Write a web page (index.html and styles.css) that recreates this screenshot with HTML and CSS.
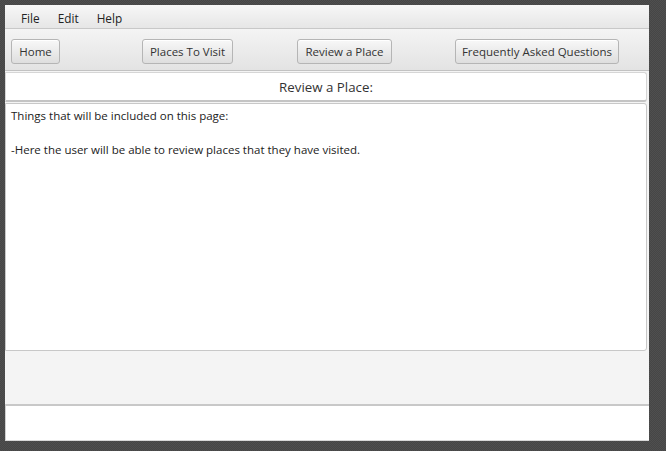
FILE: index.html
```html
<!DOCTYPE html>
<html>
<head>
<meta charset="utf-8">
<link rel="stylesheet" href="styles.css">
</head>
<body>
<div class="window">
  <div class="menubar">
    <span class="menu-item">File</span>
    <span class="menu-item">Edit</span>
    <span class="menu-item">Help</span>
  </div>
  <div class="toolbar">
    <button class="btn btn-home">Home</button>
    <button class="btn btn-places">Places To Visit</button>
    <button class="btn btn-review">Review a Place</button>
    <button class="btn btn-faq">Frequently Asked Questions</button>
  </div>
  <div class="title-box">Review a Place:</div>
  <div class="text-area">
    <p class="line">Things that will be included on this page:</p>
    <p class="line">&nbsp;</p>
    <p class="line">-Here the user will be able to review places that they have visited.</p>
  </div>
  <div class="spacer"></div>
  <div class="bottom-box"></div>
</div>
</body>
</html>
```

FILE: styles.css
```css
* { box-sizing: border-box; }
html, body { margin: 0; padding: 0; }
body {
  width: 666px;
  height: 451px;
  background-color: #4a4a4a;
  background-image: repeating-conic-gradient(#464646 0 25%, #4f4f4f 0 50%);
  background-size: 2px 2px;
  padding: 5px 0 0 5px;
  font-family: "Open Sans", "Noto Sans", sans-serif;
  font-size: 11.5px;
  color: #333;
}
.window {
  width: 644px;
  height: 436px;
  background: #f4f4f4;
  display: flex;
  flex-direction: column;
}
.menubar {
  height: 24px;
  display: flex;
  align-items: center;
  padding: 2px 0 0 16px;
  background: linear-gradient(#f7f7f7, #e6e6e6);
  border-bottom: 1px solid #c8c8c8;
}
.menu-item { margin-right: 18px; font-size: 11.8px; color: #222; }
.toolbar {
  height: 42px;
  display: flex;
  align-items: flex-start;
  padding: 10px 0 0 6px;
  background: linear-gradient(#f4f4f4, #e3e3e3);
  border-bottom: 1px solid #c2c2c2;
}
.btn {
  height: 25px;
  padding: 0;
  font-family: inherit;
  font-size: 11.5px;
  color: #333;
  border: 1px solid #b5b5b5;
  border-radius: 3px;
  background: linear-gradient(#f8f8f8, #dedede);
  box-shadow: inset 0 1px 0 #fff;
  text-align: center;
}
.btn-home { width: 49px; }
.btn-places { width: 91px; margin-left: 82px; }
.btn-review { width: 95px; margin-left: 64px; }
.btn-faq { width: 164px; margin-left: 63px; }
.title-box {
  margin-top: 1px;
  width: 642px;
  height: 30px;
  background: #fff;
  border: 1px solid #d6d6d6;
  border-bottom: 2px solid #c4c4c4;
  border-radius: 0 3px 3px 0;
  display: flex;
  align-items: center;
  justify-content: center;
  font-size: 13.3px;
  color: #333;
}
.text-area {
  margin-top: 1px;
  width: 642px;
  height: 248px;
  background: #fff;
  border: 1px solid #c8c8c8;
  border-radius: 0 3px 3px 0;
  padding: 3px 0 0 5px;
}
.line { margin: 0; line-height: 17px; font-size: 11.5px; color: #222; }
.spacer { height: 53px; }
.bottom-box {
  flex: 1;
  background: #fff;
  border-top: 2px solid #c8c8c8;
  border-left: 1px solid #d0d0d0;
  border-bottom: 1px solid #d8d8d8;
}
```
